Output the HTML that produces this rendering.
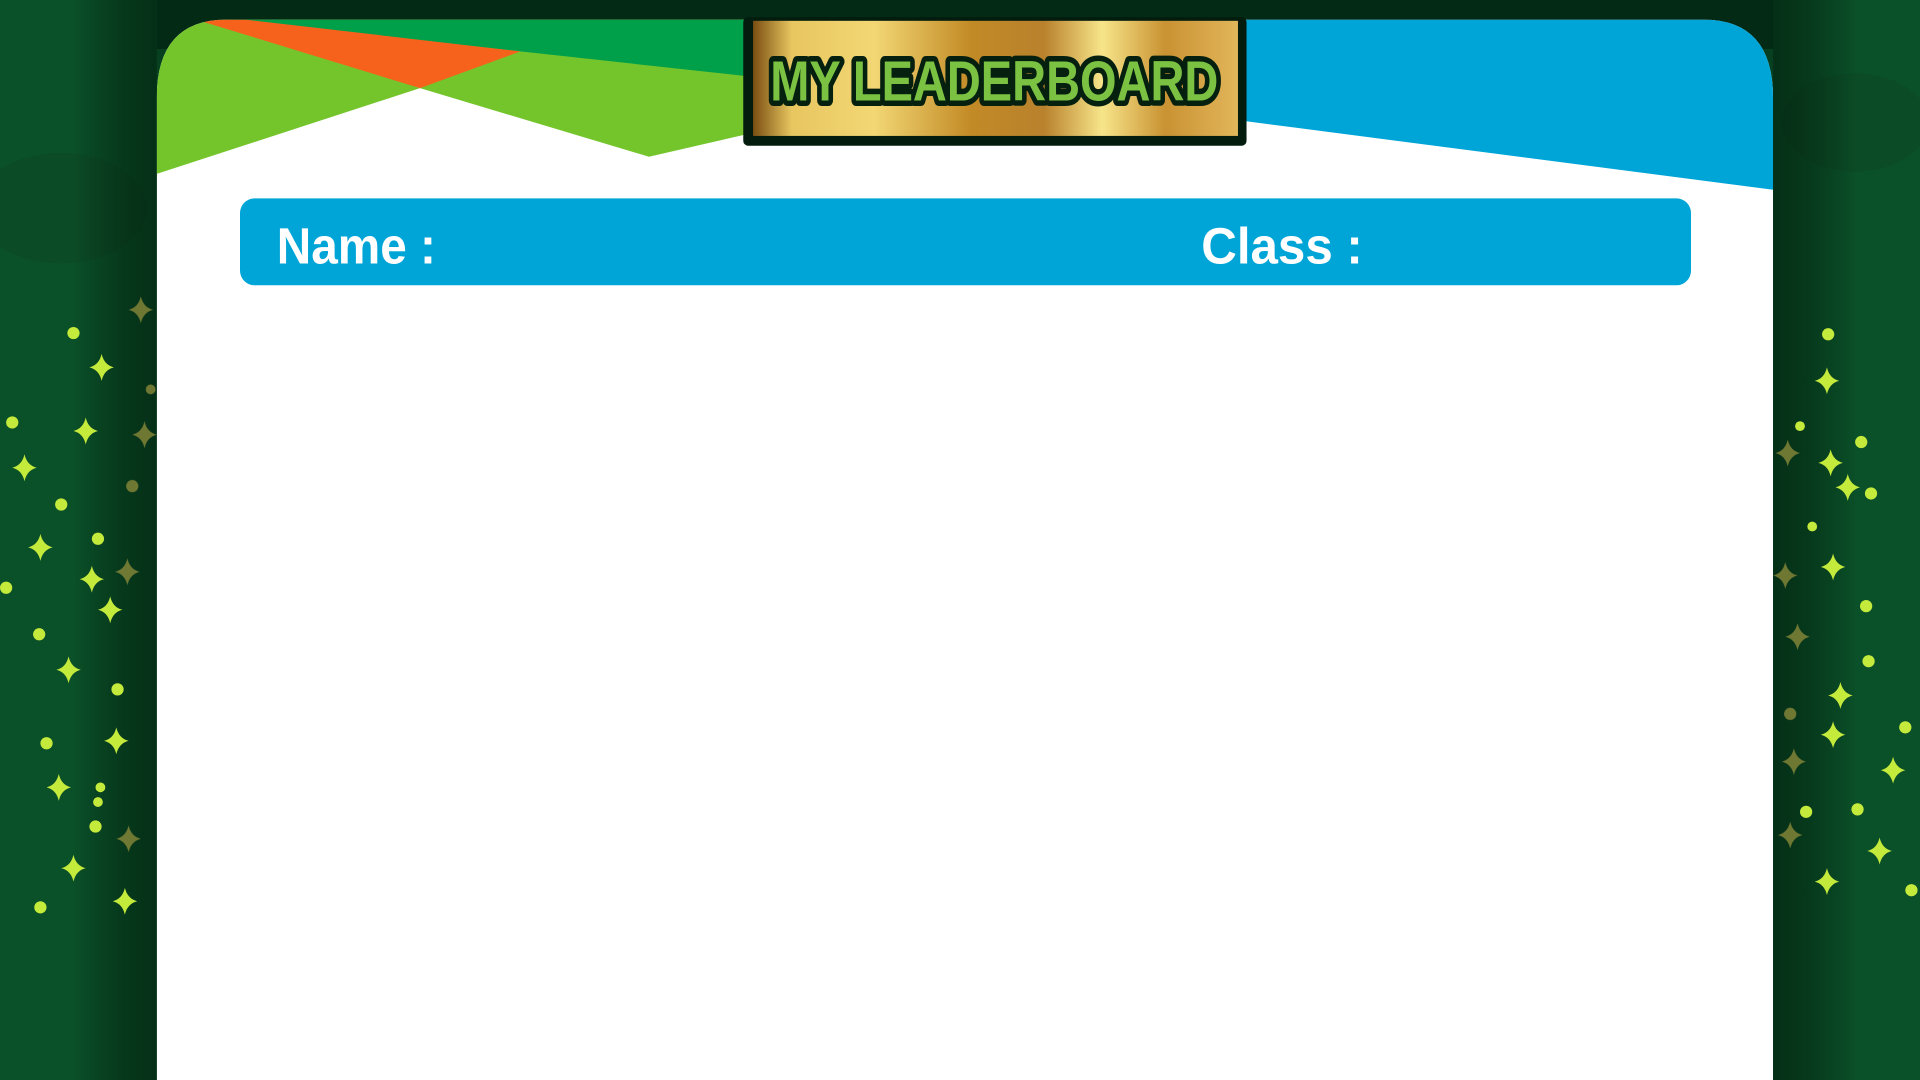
<!DOCTYPE html>
<html><head><meta charset="utf-8"><style>
html,body{margin:0;padding:0;width:1920px;height:1080px;overflow:hidden;background:#0a4a26}
svg{display:block}
</style></head><body>
<svg width="1920" height="1080" viewBox="0 0 1568 882" xmlns="http://www.w3.org/2000/svg">
<defs>
<radialGradient id="bg" cx="50%" cy="55%" r="70%">
<stop offset="0" stop-color="#0f6a33"/><stop offset="1" stop-color="#063d1e"/>
</radialGradient>
<linearGradient id="shL" x1="0" x2="1"><stop offset="0" stop-color="#000" stop-opacity="0"/><stop offset="1" stop-color="#001a0b" stop-opacity="0.6"/></linearGradient>
<linearGradient id="shR" x1="1" x2="0"><stop offset="0" stop-color="#000" stop-opacity="0"/><stop offset="1" stop-color="#001a0b" stop-opacity="0.6"/></linearGradient>
<linearGradient id="gold" x1="0" x2="1">
<stop offset="0" stop-color="#7a4e12"/><stop offset="0.08" stop-color="#e8c660"/><stop offset="0.25" stop-color="#f2d774"/>
<stop offset="0.45" stop-color="#c28a26"/><stop offset="0.6" stop-color="#b9812c"/><stop offset="0.72" stop-color="#f7e58a"/>
<stop offset="0.85" stop-color="#c99232"/><stop offset="1" stop-color="#e2b65a"/>
</linearGradient>
<clipPath id="card"><path d="M128 882 L128 80 Q128 16 185 16 L1391 16 Q1448 16 1448 80 L1448 882 Z"/></clipPath>
<path id="st" d="M0 -11 Q2 -2 10 0 Q2 2 0 11 Q-2 2 -10 0 Q-2 -2 0 -11Z"/>
</defs>
<rect width="1568" height="882" fill="url(#bg)"/>
<rect width="1568" height="40" fill="#032a15"/>
<rect x="0" y="0" width="128" height="882" fill="#0a5028"/>
<rect x="1448" y="0" width="120" height="882" fill="#0a5028"/>
<g fill="#0b4a24" opacity="0.8">
<ellipse cx="50" cy="170" rx="70" ry="45"/><ellipse cx="1515" cy="100" rx="60" ry="40"/>
</g>
<rect x="60" y="0" width="68" height="882" fill="url(#shL)"/>
<rect x="1448" y="0" width="68" height="882" fill="url(#shR)"/>
<g fill="#c4ea3c">
<circle cx="60" cy="272" r="5"/><circle cx="10" cy="345" r="5"/><circle cx="50" cy="412" r="5"/><circle cx="80" cy="440" r="5"/><circle cx="5" cy="480" r="5"/><circle cx="32" cy="518" r="5"/><circle cx="96" cy="563" r="5"/><circle cx="38" cy="607" r="5"/><circle cx="82" cy="643" r="4"/><circle cx="80" cy="655" r="4"/><circle cx="78" cy="675" r="5"/><circle cx="33" cy="741" r="5"/>
<circle cx="1493" cy="273" r="5"/><circle cx="1470" cy="348" r="4"/><circle cx="1520" cy="361" r="5"/><circle cx="1528" cy="403" r="5"/><circle cx="1480" cy="430" r="4"/><circle cx="1524" cy="495" r="5"/><circle cx="1526" cy="540" r="5"/><circle cx="1475" cy="663" r="5"/><circle cx="1517" cy="661" r="5"/><circle cx="1561" cy="727" r="5"/><circle cx="1556" cy="594" r="5"/>
<use href="#st" x="83" y="300"/><use href="#st" x="70" y="352"/><use href="#st" x="20" y="382"/><use href="#st" x="33" y="447"/><use href="#st" x="75" y="473"/><use href="#st" x="90" y="498"/><use href="#st" x="56" y="547"/><use href="#st" x="95" y="605"/><use href="#st" x="48" y="643"/><use href="#st" x="60" y="709"/><use href="#st" x="102" y="736"/>
<use href="#st" x="1492" y="311"/><use href="#st" x="1495" y="378"/><use href="#st" x="1509" y="398"/><use href="#st" x="1497" y="463"/><use href="#st" x="1503" y="568"/><use href="#st" x="1497" y="600"/><use href="#st" x="1546" y="629"/><use href="#st" x="1535" y="695"/><use href="#st" x="1492" y="720"/>
</g>
<g fill="#8a8a3a" opacity="0.8">
<use href="#st" x="115" y="253"/><use href="#st" x="118" y="355"/><use href="#st" x="104" y="467"/><use href="#st" x="105" y="685"/><circle cx="108" cy="397" r="5"/><circle cx="123" cy="318" r="4"/>
<use href="#st" x="1460" y="370"/><use href="#st" x="1458" y="470"/><use href="#st" x="1468" y="520"/><use href="#st" x="1465" y="622"/><use href="#st" x="1462" y="682"/><circle cx="1462" cy="583" r="5"/>
</g>
<g clip-path="url(#card)">
<rect x="128" y="16" width="1320" height="866" fill="#fff"/>
<polygon points="128,16 608,16 608,110 530,128 343,72 128,142" fill="#74c52c"/>
<polygon points="190,16 608,16 608,62 425,42" fill="#00a04a"/>
<polygon points="160,16 200,16 425,42 343,72" fill="#f6621c"/>
<polygon points="1010,16 1448,16 1448,155 1010,98" fill="#00a5d8"/>
</g>
<rect x="607" y="14" width="411" height="105" rx="4" fill="#031c0e"/>
<rect x="615" y="17" width="396" height="94" fill="url(#gold)"/>
<text x="812" y="82" text-anchor="middle" font-family="Liberation Sans, sans-serif" font-weight="bold" font-size="46" fill="#7cc242" stroke="#062010" stroke-width="9" paint-order="stroke" stroke-linejoin="round" textLength="366" lengthAdjust="spacingAndGlyphs">MY LEADERBOARD</text>
<rect x="196" y="162" width="1185" height="71" rx="12" fill="#00a5d8"/>
<text x="226" y="215" font-family="Liberation Sans, sans-serif" font-weight="bold" font-size="42" fill="#fff" textLength="130" lengthAdjust="spacingAndGlyphs">Name :</text>
<text x="981" y="215" font-family="Liberation Sans, sans-serif" font-weight="bold" font-size="42" fill="#fff" textLength="132" lengthAdjust="spacingAndGlyphs">Class :</text>
</svg>
</body></html>
